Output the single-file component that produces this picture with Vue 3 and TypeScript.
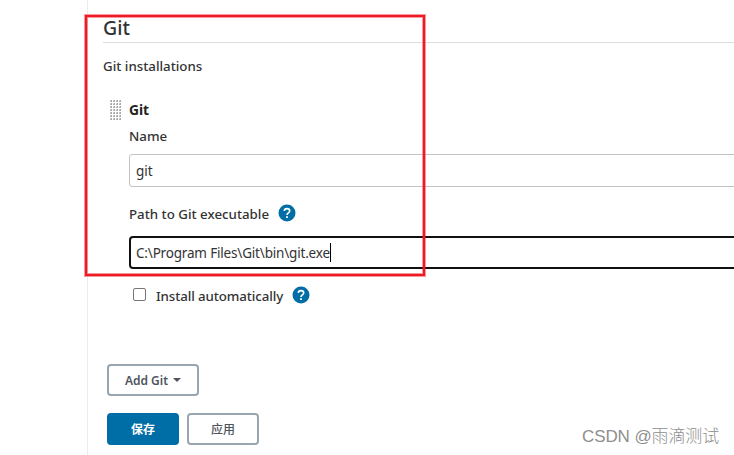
<script setup lang="ts">
import { ref } from 'vue'

const toolName = ref<string>('git')
const executable = ref<string>('C:\\Program Files\\Git\\bin\\git.exe')
const autoInstall = ref<boolean>(false)
</script>

<template>
  <div class="page">
    <main class="panel">
      <h2 class="title">Git</h2>
      <div class="subtitle">Git installations</div>
      <section class="tool">
        <div class="tool-head">
          <svg class="handle" width="12" height="20" viewBox="0 0 12 20">
            <defs>
              <pattern id="grip" width="3" height="3" patternUnits="userSpaceOnUse">
                <rect x="0" y="0" width="2" height="2" fill="#d0d0d0" />
                <rect x="1" y="0" width="1" height="1" fill="#a8a8a8" />
                <rect x="0" y="1" width="1" height="1" fill="#b4b4b4" />
                <rect x="1" y="1" width="1" height="1" fill="#a8a8a8" />
              </pattern>
            </defs>
            <rect width="12" height="20" fill="url(#grip)" />
          </svg>
          <span class="tool-name">Git</span>
        </div>
        <div class="fields">
          <label class="label name">Name</label>
          <div class="input">{{ toolName }}</div>
          <div class="label path">
            <span>Path to Git executable</span>
            <svg class="help" width="18" height="18" viewBox="0 0 18 18">
              <circle cx="9" cy="9" r="8.5" fill="#006ea6" />
              <path d="M6.3 7.1C6.3 5.5 7.4 4.6 9 4.6s2.7.9 2.7 2.3c0 1.9-2.7 2-2.7 4" fill="none" stroke="#fff" stroke-width="1.6" />
              <rect x="8.1" y="12.2" width="1.8" height="1.8" fill="#fff" />
            </svg>
          </div>
          <div class="input focused"><span class="exe">{{ executable }}</span><i class="caret"></i></div>
          <div class="check">
            <span class="box" :class="{ on: autoInstall }"></span>
            <span class="auto">Install automatically</span>
            <svg class="help" width="18" height="18" viewBox="0 0 18 18">
              <circle cx="9" cy="9" r="8.5" fill="#006ea6" />
              <path d="M6.3 7.1C6.3 5.5 7.4 4.6 9 4.6s2.7.9 2.7 2.3c0 1.9-2.7 2-2.7 4" fill="none" stroke="#fff" stroke-width="1.6" />
              <rect x="8.1" y="12.2" width="1.8" height="1.8" fill="#fff" />
            </svg>
          </div>
        </div>
      </section>
      <button class="btn add"><span>Add Git</span><i class="arrow"></i></button>
      <div class="actions">
        <button class="btn primary">保存</button>
        <button class="btn">应用</button>
      </div>
    </main>
    <div class="highlight"></div>
    <div class="watermark">CSDN @雨滴测试</div>
  </div>
</template>

<style>
body {
  background: #fff;
  overflow: hidden;
}
</style>

<style scoped>
.page {
  position: relative;
  box-sizing: border-box;
  width: 734px;
  height: 455px;
  padding-left: 87px;
  overflow: hidden;
  font-family: "Noto Sans", "Open Sans", "Noto Sans CJK SC", sans-serif;
  font-size: 13.3px;
  line-height: 20px;
  color: #333;
  white-space: nowrap;
}
.panel {
  box-sizing: border-box;
  height: 455px;
  border-left: 1px solid #ececec;
  padding-left: 15px;
}
.title {
  box-sizing: border-box;
  height: 43px;
  margin: 0;
  padding-top: 14px;
  border-bottom: 1px solid #ddd;
  font-size: 19.5px;
  font-weight: 500;
  line-height: 28px;
}
.subtitle {
  padding-top: 13px;
  font-weight: 500;
}
.tool {
  padding: 24px 0 0 7px;
}
.tool-head {
  display: flex;
  gap: 7px;
  font-size: 13.8px;
  font-weight: 700;
  color: #222;
}
.fields {
  padding-left: 19px;
}
.label {
  display: flex;
  align-items: center;
  height: 20px;
  font-weight: 500;
}
.name {
  margin: 6px 0 8px;
}
.path {
  margin: 17px 0 12px;
}
.input {
  box-sizing: border-box;
  display: flex;
  align-items: center;
  width: 640px;
  height: 33px;
  padding: 1px 6px 0;
  border: 1px solid #c3c3c3;
  border-radius: 3px;
  font-size: 13.5px;
}
.focused {
  border: 2px solid #111;
  border-radius: 4px;
  padding: 1px 5px 0;
}
.exe {
  width: 194px;
  letter-spacing: -0.18px;
}
.caret {
  width: 1px;
  height: 19px;
  margin-top: -2px;
  background: #000;
}
.help {
  margin: -2px 0 0 9px;
}
.check {
  display: flex;
  align-items: center;
  height: 20px;
  margin-top: 17px;
  padding-left: 4px;
  font-weight: 500;
}
.auto {
  width: 127px;
  letter-spacing: -0.1px;
}
.box {
  box-sizing: border-box;
  width: 13px;
  height: 13px;
  margin: -3px 10px 0 0;
  border: 1px solid #767676;
  border-radius: 2px;
}
.box.on {
  background: #006ea6;
}
.btn {
  box-sizing: border-box;
  display: flex;
  align-items: center;
  justify-content: center;
  width: 72px;
  height: 32px;
  padding: 0;
  border: 2px solid #98a6b0;
  border-radius: 4px;
  background: #fff;
  color: #4d545d;
  font: 600 12px "Noto Sans", "Noto Sans CJK SC", sans-serif;
}
.add {
  width: 92px;
  margin: 58px 0 17px 4px;
}
.arrow {
  margin: 0 0 1px 5px;
  border: 4px solid transparent;
  border-top-color: #4d545d;
  border-bottom: 0;
}
.actions {
  display: flex;
  gap: 8px;
  padding-left: 4px;
}
.actions .btn {
  font-weight: 500;
}
.actions .primary {
  border-color: #006ea6;
  background: #006ea6;
  color: #fff;
  font-weight: 700;
}
.highlight {
  position: absolute;
  box-sizing: border-box;
  left: 85px;
  top: 15px;
  width: 340px;
  height: 261px;
  border: 2px solid #ed1c24;
  box-shadow: 0 0 0 1px rgba(237, 28, 36, 0.45), inset 0 0 0 1px rgba(237, 28, 36, 0.45);
}
.watermark {
  position: absolute;
  left: 582px;
  top: 425px;
  font: 300 17px/24px "Liberation Sans", "Noto Sans CJK SC", sans-serif;
  letter-spacing: -0.1px;
  color: #8e8e8e;
}
</style>
